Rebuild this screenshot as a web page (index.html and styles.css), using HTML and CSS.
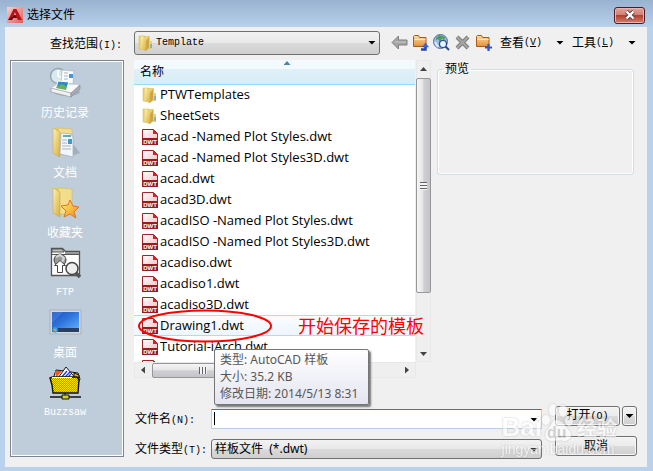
FILE: index.html
```html
<!DOCTYPE html>
<html lang="zh-CN">
<head>
<meta charset="utf-8">
<title>选择文件</title>
<link rel="stylesheet" href="styles.css">
</head>
<body>
<svg class="defs" width="0" height="0" aria-hidden="true">
  <defs>
    <linearGradient id="fold" x1="0" x2="1" y1="0" y2="1"><stop offset="0" stop-color="#fff3b0"/><stop offset="1" stop-color="#d6ad3f"/></linearGradient>
    <linearGradient id="pink" x1="0" x2="1" y1="0" y2="1"><stop offset="0" stop-color="#fff"/><stop offset="1" stop-color="#efb6ba"/></linearGradient>
    <linearGradient id="orange" x1="0" x2="0" y1="0" y2="1"><stop offset="0" stop-color="#ffdca4"/><stop offset="1" stop-color="#e08f3c"/></linearGradient>
    <linearGradient id="screen" x1="0" x2="1" y1="0" y2="1"><stop offset="0" stop-color="#1d50b8"/><stop offset=".45" stop-color="#2f74dd"/><stop offset="1" stop-color="#66b4ff"/></linearGradient>
    <linearGradient id="star" x1="0" x2="1" y1="0" y2="1"><stop offset="0" stop-color="#fff27a"/><stop offset="1" stop-color="#f08a12"/></linearGradient>
    <linearGradient id="brand" x1="0" x2="1" y1="0" y2="1"><stop offset="0" stop-color="#f9d3d2"/><stop offset="1" stop-color="#e05a56"/></linearGradient>
    <pattern id="check" width="2" height="2" patternUnits="userSpaceOnUse"><rect width="2" height="2" fill="#ffe500"/><rect width="1" height="1" fill="#f2701c"/><rect x="1" y="1" width="1" height="1" fill="#f2701c"/></pattern>
    <symbol id="folder" viewBox="0 0 16 16">
      <path d="M1 1h6v14l-6-1z" fill="#ecd57a" stroke="#cfb24c" stroke-width=".5"/>
      <path d="M7 1h5v12l-5 2z" fill="#e9d073"/>
      <path d="M3 1l5 2v13l-5-2z" fill="url(#fold)"/>
      <path d="M8 6l3-4v11l-3 3z" fill="#cfa640"/>
      <path d="M11 6h3v8h-3z" fill="#e8cf78"/><path d="M12.500 9h1.200v4h-1.200z" fill="#45a6dc"/>
    </symbol>
    <symbol id="dwt" viewBox="0 0 16 16">
      <path d="M.5.5h11l4 4v11H.5z" fill="url(#pink)" stroke="#9c2529"/>
      <path d="M11 0l5 5h-5z" fill="#e01c22"/>
      <path d="M0 9h16v7H0z" fill="#9b1b20"/>
      <text x="8" y="15" text-anchor="middle" class="dwt-tag">DWT</text>
    </symbol>
    <symbol id="bigfolder" viewBox="0 0 32 32">
      <path d="M4 2h10v26l-10-3z" fill="#e5c965"/>
      <path d="M9 2l14 1v25H10z" fill="#f2dd8c" stroke="#d7b95e" stroke-width=".6"/>
      <path d="M4 2l7 4v25l-7-4z" fill="url(#fold)" stroke="#ccaa4c" stroke-width=".6"/>
    </symbol>
    <symbol id="orangefolder" viewBox="0 0 17 17">
      <path d="M1.500 12.500V2.500l1-1h4l1 2h6.500v9z" fill="url(#orange)" stroke="#a85c16"/>
      <path d="M2.500 5.500h11" stroke="#ffe8c3"/>
    </symbol>
  </defs>
</svg>

<main class="dialog">
  <header class="titlebar">
    <svg class="brand" viewBox="0 0 16 16" aria-hidden="true">
      <path d="M0 0h16v16H0z" fill="url(#brand)"/>
      <path d="M1 13L6.500 2h3L15 13h-4l-1-2H6l-1 2z" fill="#b5121b"/><path d="M7 8l1-3 1 3z" fill="#f3a8a2"/><path d="M1 13l7-5 2 3H6l-1 2z" fill="#5f0b10"/>
    </svg>
    <h1>选择文件</h1>
    <button class="close" type="button" aria-label="关闭"><svg width="12" height="10" viewBox="0 0 12 10"><path d="M2.500 1.500l7 7m0-7l-7 7" stroke="#5b3a40" stroke-width="4"/><path d="M2.500 1.500l7 7m0-7l-7 7" stroke="#fff" stroke-width="2.400"/></svg></button>
  </header>

  <div class="client">
    <div class="toolbar">
      <label class="look-label" for="look">查找范围<span class="lat">(I):</span></label>
      <div class="combo look">
        <svg class="combo-icon" aria-hidden="true"><use href="#folder"/></svg>
        <select id="look" class="lat"><option>Template</option></select>
        <i class="down"></i>
      </div>
      <div class="tools">
        <button type="button" aria-label="后退"><svg viewBox="0 0 17 17"><path d="M1 8.500L7.500 2v4H16v5H7.500v4z" fill="#a5a5a5" stroke="#808080"/><path d="M4 8h11" stroke="#c8c8c8"/></svg></button>
        <button type="button" aria-label="上一级"><svg viewBox="0 0 17 17"><use href="#orangefolder"/><path d="M9 15.500h4.500V12" fill="none" stroke="#2445ae" stroke-width="2.500"/><path d="M10.500 13l3-4 3 4z" fill="#3c6be2" stroke="#2445ae" stroke-width=".5"/></svg></button>
        <button type="button" aria-label="搜索 Web"><svg viewBox="0 0 17 17"><circle cx="7.500" cy="7.500" r="7" fill="#9cb9e6" stroke="#5570a4"/><path d="M3 4l3-3 3 1 3 1-1 4-2-3-2 4-2-3-2 1z" fill="#4b9d58"/><path d="M2 8l3 5" stroke="#dceafc" stroke-width="2"/><circle cx="10" cy="10" r="3.500" fill="#e8f5ff" stroke="#27488c" stroke-width="1.200"/><path d="M12.500 12.500L16 16" stroke="#27488c" stroke-width="2"/></svg></button>
        <button type="button" aria-label="删除"><svg viewBox="0 0 17 17"><path d="M3 3l11 11M14 3L3 14" stroke="#777" stroke-width="4"/><path d="M3 3l11 11M14 3L3 14" stroke="#a5a5a5" stroke-width="2.400"/></svg></button>
        <button type="button" aria-label="新建文件夹"><svg viewBox="0 0 17 17"><use href="#orangefolder"/><path d="M13.500 10v7M10 13.500h7" stroke="#2854ce" stroke-width="2.200"/></svg></button>
      </div>
      <button class="menu" type="button">查看<span class="lat">(<u>V</u>)</span><i class="down"></i></button>
      <button class="menu" type="button">工具<span class="lat">(<u>L</u>)</span><i class="down"></i></button>
    </div>

    <nav class="places">
      <a href="#history"><svg viewBox="0 0 32 32">
        <ellipse cx="18" cy="26" rx="13" ry="4" fill="#8796a6" opacity=".5"/>
        <circle cx="9" cy="10" r="7.500" fill="#d9e9ee" stroke="#92a9b4" stroke-width="1.500"/><path d="M9 4v6l4 2" stroke="#fff" stroke-width="1.500" fill="none"/>
        <path d="M13 4l12 1-1 13-12-2z" fill="#f9fbfd" stroke="#a5b4c2" stroke-width=".7"/><path d="M15 7h4m-4 3h4m-4 3h4" stroke="#aab4bd"/><path d="M20 8h4v4h-4z" fill="#4896d8"/>
        <path d="M2 22l8-4 20 1-7 8-20-2z" fill="#fafafa"/><path d="M9 15l11 1-3 8-10-2z" fill="#288bd2" stroke="#fff"/><path d="M8 20l5-2 5 3-1 3-10-2z" fill="#69b25b"/>
        <path d="M2 22l20 5v4L2 26z" fill="#f1f1f2" stroke="#9299a2" stroke-width=".7"/><path d="M22 27l9-8v4l-9 8z" fill="#a9acb4" stroke="#858b94" stroke-width=".7"/>
      </svg>历史记录</a>
      <a href="#documents"><svg viewBox="0 0 32 32"><path d="M22 30l9-3-6-8z" fill="#8494a4" opacity=".5"/><use href="#bigfolder"/><path d="M12 7l10 1 2 3v20l-13-3z" fill="#f4f7fa" stroke="#9cabb9" stroke-width=".7"/><path d="M14 10h8" stroke="#67a8be" stroke-width="2"/><path d="M13 14h5m-5 3h5m-5 3h9m-9 3h9" stroke="#a7b4c2"/><path d="M19 13h4v5h-4z" fill="#3c9ac4"/></svg>文档</a>
      <a href="#favorites"><svg viewBox="0 0 32 32"><use href="#bigfolder"/><path d="M21 14l3 6 6 1-5 5 2 6-6-4-6 3 2-6-5-5 7-1z" fill="url(#star)" stroke="#d87722"/></svg>收藏夹</a>
      <a href="#ftp"><svg viewBox="0 0 32 32"><path d="M2.500 29.500v-27h11l3 3h14v24z" fill="#fff" stroke="#555" stroke-width="1.300"/><path d="M3 3h10l2 3H3z" fill="#bfbfbf" stroke="#555"/><path d="M16 7h14" stroke="#999" stroke-width="2"/><path d="M3 8.500h27" stroke="#555"/><circle cx="11" cy="14" r="6" fill="#999" stroke="#444"/><path d="M7 11l4-2 4 3-2 4" fill="none" stroke="#d7d7d7" stroke-width="2"/><path d="M8.500 26.500v-7h-3l5.500-5 5.500 5h-3v7z" fill="#fff" stroke="#444"/><path d="M26 26l5 5" stroke="#555" stroke-width="3.500"/><circle cx="23" cy="22.500" r="6" fill="#eee" stroke="#444" stroke-width="1.500"/></svg><span class="lat">FTP</span></a>
      <a href="#desktop"><svg viewBox="0 0 32 32"><path d="M1 4h31v24H1z" fill="#d4d8dc" stroke="#aab1ba"/><path d="M3 6h27v19H3z" fill="url(#screen)"/><path d="M3 17L14 6H3z" fill="#78afff" opacity=".25"/><path d="M3 22h27v4H3z" fill="#293e64"/><circle cx="6" cy="24" r="2.800" fill="#38a4d8"/><path d="M5 23h2v2H5z" fill="#f58d38"/></svg>桌面</a>
      <a href="#buzzsaw"><svg viewBox="0 0 32 32"><path d="M4 13l3-9 8 1 14 2 2 6-4 8z" fill="#fff" stroke="#111"/><path d="M6 5h7l-6 7z" fill="#f35a28"/><path d="M9 12l8-11 12 14-9 5z" fill="#fff" stroke="#111"/><path d="M12 12l6-7m-3 7l6-6m-3 6l4-4" stroke="#2436dc" stroke-width="1.300"/><path d="M25 7l5 2-1 7-4-5z" fill="#efb319" stroke="#111"/><path d="M1 12l3-1h24l2 3-1 13H4L3 19z" fill="url(#check)" stroke="#111" stroke-width="1.400"/><path d="M3 11.500h20" stroke="#fff"/><path d="M1 31h31" stroke="#111" stroke-width="1.500"/><path d="M13 29h7v4h-7z" fill="#d3d11c" stroke="#111"/><path d="M16 27v2" stroke="#111"/></svg><span class="lat">Buzzsaw</span></a>
    </nav>

    <div class="workspace">
      <section class="browser">
        <div class="files">
          <div class="list">
            <table>
              <thead><tr><th scope="col">名称<i class="sort"></i></th></tr></thead>
              <tbody>
                <tr><td><svg><use href="#folder"/></svg>PTWTemplates</td></tr>
                <tr><td><svg><use href="#folder"/></svg>SheetSets</td></tr>
                <tr><td><svg><use href="#dwt"/></svg>acad -Named Plot Styles.dwt</td></tr>
                <tr><td><svg><use href="#dwt"/></svg>acad -Named Plot Styles3D.dwt</td></tr>
                <tr><td><svg><use href="#dwt"/></svg>acad.dwt</td></tr>
                <tr><td><svg><use href="#dwt"/></svg>acad3D.dwt</td></tr>
                <tr><td><svg><use href="#dwt"/></svg>acadISO -Named Plot Styles.dwt</td></tr>
                <tr><td><svg><use href="#dwt"/></svg>acadISO -Named Plot Styles3D.dwt</td></tr>
                <tr><td><svg><use href="#dwt"/></svg>acadiso.dwt</td></tr>
                <tr><td><svg><use href="#dwt"/></svg>acadiso1.dwt</td></tr>
                <tr><td><svg><use href="#dwt"/></svg>acadiso3D.dwt</td></tr>
                <tr class="hot"><td><svg><use href="#dwt"/></svg>Drawing1.dwt</td></tr>
                <tr><td><svg><use href="#dwt"/></svg>Tutorial-iArch.dwt</td></tr>
                <tr><td><svg><use href="#dwt"/></svg></td></tr>
              </tbody>
            </table>
          </div>
          <div class="vbar"><i class="arrow up"></i><div class="thumb"><i class="grip"></i></div><i class="arrow dn"></i></div>
          <div class="hbar"><i class="arrow lt"></i><div class="thumb"><i class="grip"></i></div><i class="arrow rt"></i></div>
          <svg class="ring" viewBox="0 0 136 34" aria-hidden="true"><ellipse cx="68" cy="17" rx="66" ry="15.500" fill="none" stroke="#f00" stroke-width="2"/></svg>
          <p class="note">开始保存的模板</p>
          <div class="tip" role="tooltip"><p>类型: AutoCAD 样板</p><p>大小: 35.2 KB</p><p>修改日期: 2014/5/13 8:31</p></div>
        </div>
        <fieldset class="preview"><legend>预览</legend></fieldset>
      </section>

      <form class="fields">
        <label for="name">文件名<span class="lat">(N):</span></label>
        <div class="combo name"><input id="name" type="text"><i class="caret"></i><i class="down"></i></div>
        <div class="actions"><button class="push" type="button">打开<span class="lat">(O)</span></button><button class="push drop" type="button" aria-label="打开选项"><i class="down"></i></button></div>
        <label for="type">文件类型<span class="lat">(T):</span></label>
        <div class="combo type"><select id="type"><option>样板文件&nbsp; (*.dwt)</option></select><i class="down"></i></div>
        <div class="actions"><button class="push" type="button">取消</button></div>
      </form>
    </div>
  </div>

  <div class="watermark">
    <div class="wm-top"><span>Bai</span><span class="paw"><svg viewBox="0 0 30 38" aria-hidden="true"><ellipse cx="4" cy="16" rx="4" ry="5"/><ellipse cx="11" cy="6" rx="4" ry="6"/><ellipse cx="21" cy="7" rx="4" ry="6"/><ellipse cx="27" cy="17" rx="4" ry="5"/><path d="M15 16c-5 0-5 5-9 9-4 3-4 11 3 12 4 0 9-1 13 0 7 0 9-7 5-11-4-3-6-10-12-10z"/></svg><b>du</b></span><span class="cn">经验</span></div>
    <div class="wm-url">jingyan.baidu.com</div>
  </div>
</main>
</body>
</html>
```
FILE: styles.css
```css
* { box-sizing: border-box; }

body {
  margin: 0;
  font: 12px/16px "Noto Sans", "Noto Sans CJK SC", sans-serif;
  color: #000;
}

.defs { position: absolute; }
button, select, input { font: inherit; color: inherit; }
button { padding: 0; border: 0; background: none; }
p { margin: 0; }
.lat { font-family: "Liberation Mono", monospace; font-size: 10px; }
.dwt-tag { font: bold 6px "Liberation Sans", sans-serif; fill: #fff; }

.down {
  width: 8px;
  height: 4px;
  background: #000;
  clip-path: polygon(0 0, 100% 0, 50% 100%);
}

.dialog {
  position: relative;
  display: flex;
  flex-direction: column;
  min-height: 100vh;
  padding: 0 6px 6px 5px;
  background: linear-gradient(#98b2d0, #b9d1ea 27px);
}

.titlebar {
  display: flex;
  align-items: center;
  height: 27px;
  padding: 3px 2px 0;
}
.titlebar h1 { flex: 1; margin: 0 0 0 4px; font-size: 12px; font-weight: 400; }
.brand { width: 16px; height: 16px; }
.close {
  display: flex;
  align-items: center;
  justify-content: center;
  width: 31px;
  height: 17px;
  border: 1px solid #4b1c25;
  border-radius: 3px;
  background: linear-gradient(#e3a198, #d28075 45%, #b4402f 50%, #d08070);
  box-shadow: inset 0 0 0 1px #e8b6ae;
}

.client {
  flex: 1;
  display: grid;
  grid-template-columns: 114px 1fr;
  grid-template-rows: 33px 1fr;
  column-gap: 10px;
  padding: 0 10px 8px 5px;
  background: #f0f0f0;
}

.toolbar {
  grid-column: 1 / -1;
  display: flex;
  align-items: center;
  padding-bottom: 2px;
}
.look-label { width: 124px; padding-right: 12px; padding-top: 4px; text-align: right; }

.combo { position: relative; }
.combo select, .combo input {
  display: block;
  width: 100%;
  height: 20px;
  margin: 0;
  padding: 0 20px 0 3px;
  border: 1px solid #707070;
  border-radius: 3px;
  outline: 0;
  appearance: none;
  background: linear-gradient(#f2f2f2, #e8e8e8 50%, #dadada 52%, #cfcfcf);
}
.combo .down { position: absolute; right: 4px; top: 9px; pointer-events: none; }
.look { flex: 1; }
.combo.look select { height: 24px; padding-left: 21px; }
.combo.look .down { top: 10px; }
.combo-icon { position: absolute; left: 4px; top: 4px; width: 16px; height: 16px; }
.combo.name input {
  border-color: #3d7bad #b5cfe7 #b5cfe7;
  border-radius: 0;
  background: #fff;
}
.caret { position: absolute; left: 3px; top: 3px; width: 1px; height: 13px; background: #000; }

.tools { display: flex; gap: 4px; margin: 0 8px 0 11px; }
.tools button, .tools svg { display: block; width: 17px; height: 17px; }
.menu { display: flex; align-items: center; margin-right: 8px; }
.menu .down { margin-left: 14px; }
.menu:last-child { margin-right: 1px; }

.places {
  display: flex;
  flex-direction: column;
  margin-bottom: 2px;
  padding-top: 5px;
  border: 1px solid #7d838f;
  background: #bfccda;
  box-shadow: inset 0 0 0 1px #fff;
}
.places a {
  display: flex;
  flex-direction: column;
  align-items: center;
  gap: 7px;
  height: 60px;
  padding-right: 4px;
  color: #fff;
  text-decoration: none;
}
.places svg { width: 32px; height: 32px; flex: none; overflow: visible; }

.workspace { display: flex; flex-direction: column; }
.browser { display: flex; gap: 6px; }
.files {
  position: relative;
  flex: 1;
  display: grid;
  grid-template-columns: 1fr 15px;
  grid-template-rows: 302px 16px;
}
.list { overflow: hidden; margin-right: 1px; background: #fff; }
.list table { width: 100%; border-collapse: collapse; }
.list th {
  position: relative;
  height: 24px;
  padding: 0 6px;
  border-bottom: 1px solid #96d9f9;
  background: linear-gradient(#f2fafd 9px, #dff0f8 9px, #d7edf7);
  text-align: left;
  font-weight: 400;
}
.sort {
  position: absolute;
  left: calc(50% + 9px);
  top: 1px;
  width: 7px;
  height: 4px;
  background: #4786a8;
  clip-path: polygon(50% 0, 100% 100%, 0 100%);
}
.list td {
  height: 21px;
  padding: 0 0 0 8px;
  font-family: "Open Sans", "Noto Sans CJK SC", sans-serif;
  font-size: 13px;
  line-height: 19px;
  white-space: nowrap;
}
.list td svg { width: 16px; height: 16px; margin-right: 2px; vertical-align: -4px; }
.hot td {
  background: linear-gradient(#fbfdff, #edf5fe);
  box-shadow: inset 0 1px #b8d6fb, inset 0 -1px #b8d6fb;
}

.vbar, .hbar { display: flex; align-items: center; background: #efefef; box-shadow: inset 0 0 0 1px #e8e8e8; }
.vbar { flex-direction: column; padding: 7px 0 6px; }
.vbar .arrow, .hbar .arrow { flex: none; background: #444; }
.up { width: 7px; height: 4px; clip-path: polygon(50% 0, 100% 100%, 0 100%); }
.dn { width: 7px; height: 4px; margin-top: auto; clip-path: polygon(0 0, 100% 0, 50% 100%); }
.lt { width: 4px; height: 7px; clip-path: polygon(0 50%, 100% 0, 100% 100%); }
.rt { width: 4px; height: 7px; margin-left: auto; clip-path: polygon(0 0, 100% 50%, 0 100%); }
.thumb {
  display: flex;
  align-items: center;
  justify-content: center;
  border: 1px solid #979797;
  border-radius: 2px;
}
.vbar .thumb { width: 15px; height: 215px; margin-top: 7px; background: linear-gradient(90deg, #f5f5f5, #e6e6e8 45%, #d0d0d4 52%, #c3c3c9); }
.hbar { padding: 0 7px; }
.hbar .thumb { width: 102px; height: 15px; margin-left: 7px; background: linear-gradient(#f5f5f5, #e6e6e8 45%, #d0d0d4 52%, #c3c3c9); }
.vbar .grip { width: 7px; height: 8px; background: repeating-linear-gradient(#606468 0 1px, #f4f4f4 1px 3px); }
.hbar .grip { width: 8px; height: 7px; background: repeating-linear-gradient(90deg, #606468 0 1px, #f4f4f4 1px 3px); }

.ring { position: absolute; left: 3px; top: 249px; width: 136px; height: 34px; }
.note { position: absolute; left: 164px; top: 254px; color: #f00; font-size: 18px; line-height: 24px; white-space: nowrap; }
.tip {
  position: absolute;
  left: 80px;
  top: 289px;
  padding: 1px 10px 2px 5px;
  border: 1px solid #767676;
  border-radius: 2px;
  background: linear-gradient(#fff, #e4e5f0);
  box-shadow: 2px 2px 2px #777;
  color: #575757;
  line-height: 17px;
  white-space: nowrap;
}

.preview {
  width: 197px;
  height: 115px;
  margin: 0 3px 0 0;
  padding: 0;
  border: 1px solid #d0dce6;
  border-radius: 3px;
  box-shadow: inset 0 0 0 1px #fff;
}
.preview legend { margin-left: 5px; padding: 0 2px; line-height: 18px; }

.fields {
  display: grid;
  grid-template-columns: 77px 1fr 82px;
  row-gap: 7px;
  align-items: center;
  padding-top: 28px;
}
.fields label { padding: 5px 0 0 1px; white-space: nowrap; }
.fields .combo { margin: 2px 13px 0 0; }
.actions { display: flex; align-self: start; gap: 2px; height: 20px; }
.push {
  flex: 1;
  border: 1px solid #707070;
  border-radius: 3px;
  background: linear-gradient(#f3f3f3, #ebebeb 50%, #dcdcdc 52%, #cfcfcf);
  box-shadow: inset 0 0 0 1px #f8f8f8;
  line-height: 16px;
}
.push.drop { display: flex; flex: 0 0 15px; align-items: center; justify-content: center; }

.watermark {
  position: absolute;
  right: 36px;
  bottom: 16px;
  color: #fff;
  opacity: .6;
  pointer-events: none;
  filter: drop-shadow(0 0 1px #aaa);
}
.wm-top { display: flex; align-items: flex-end; height: 40px; font: bold 26px/30px "Liberation Sans", sans-serif; }
.paw { position: relative; width: 31px; height: 38px; }
.paw svg { width: 30px; height: 38px; fill: #fff; overflow: visible; }
.paw b { position: absolute; left: 5px; bottom: 0; color: #bbb; font-size: 16px; line-height: 18px; }
.wm-top .cn { margin-left: 4px; font-family: "Noto Sans CJK SC", sans-serif; font-size: 20px; line-height: 28px; }
.wm-url { font: 14px/15px "Liberation Sans", sans-serif; }
```
